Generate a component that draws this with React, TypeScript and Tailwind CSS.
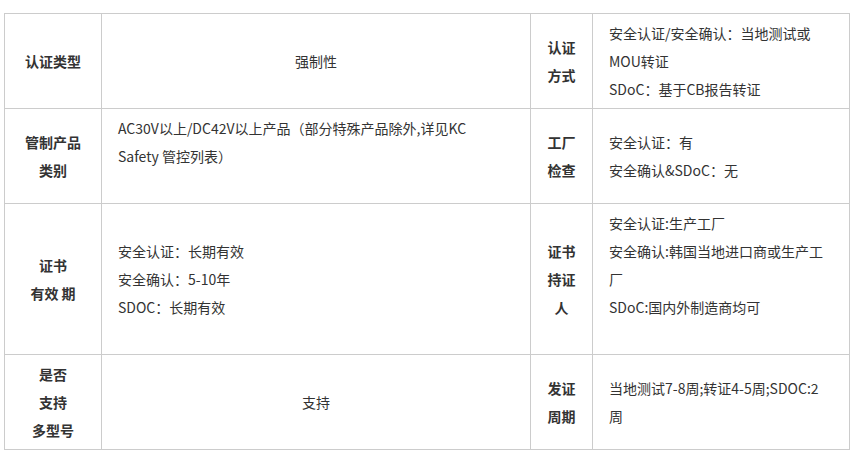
const label = "text-center align-middle font-bold px-1";
const cell = "align-middle pl-4 pr-3";

function Lines({ items }: { items: string[] }) {
  return (
    <>
      {items.map((t, i) => (
        <div key={i} className="whitespace-nowrap h-[28px]">
          {t}
        </div>
      ))}
    </>
  );
}

export default function App() {
  return (
    <div
      className="w-[859px] h-[456px] bg-white pt-[13px] pl-[4px] text-[14px] leading-[28px] text-[#333]"
      style={{ fontFamily: '"Noto Sans CJK SC", "Noto Sans", sans-serif' }}
    >
      <table className="table-fixed border-collapse w-[845px] border border-[#cccccc] [&_td]:border [&_td]:border-[#cccccc]">
        <colgroup>
          <col className="w-[97px]" />
          <col className="w-[429px]" />
          <col className="w-[62px]" />
          <col className="w-[257px]" />
        </colgroup>
        <tbody>
          <tr className="h-[95px]">
            <td className={label}>认证类型</td>
            <td className="text-center align-middle">强制性</td>
            <td className={label}>
              <Lines items={["认证", "方式"]} />
            </td>
            <td className={cell}>
              <Lines items={["安全认证/安全确认：当地测试或", "MOU转证", "SDoC：基于CB报告转证"]} />
            </td>
          </tr>
          <tr className="h-[95px]">
            <td className={label}>
              <Lines items={["管制产品", "类别"]} />
            </td>
            <td className={cell}>
              <Lines items={["AC30V以上/DC42V以上产品（部分特殊产品除外,详见KC", "Safety 管控列表）", ""]} />
            </td>
            <td className={label}>
              <Lines items={["工厂", "检查"]} />
            </td>
            <td className={cell}>
              <Lines items={["安全认证：有", "安全确认&SDoC：无"]} />
            </td>
          </tr>
          <tr className="h-[151px]">
            <td className={label}>
              <Lines items={["证书", "有效 期"]} />
            </td>
            <td className={cell}>
              <Lines items={["安全认证：长期有效", "安全确认：5-10年", "SDOC：长期有效"]} />
            </td>
            <td className={label}>
              <Lines items={["证书", "持证", "人"]} />
            </td>
            <td className={cell}>
              <Lines
                items={["安全认证:生产工厂", "安全确认:韩国当地进口商或生产工", "厂", "SDoC:国内外制造商均可", ""]}
              />
            </td>
          </tr>
          <tr className="h-[95px]">
            <td className={label}>
              <Lines items={["是否", "支持", "多型号"]} />
            </td>
            <td className="text-center align-middle">支持</td>
            <td className={label}>
              <Lines items={["发证", "周期"]} />
            </td>
            <td className={cell}>
              <Lines items={["当地测试7-8周;转证4-5周;SDOC:2", "周"]} />
            </td>
          </tr>
        </tbody>
      </table>
    </div>
  );
}
